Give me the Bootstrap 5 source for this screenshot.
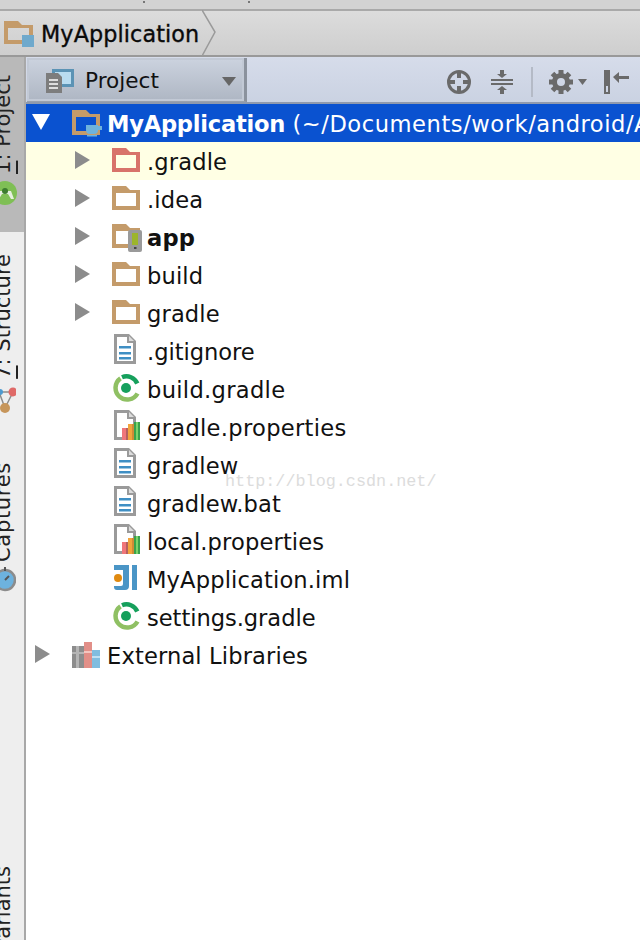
<!DOCTYPE html>
<html lang="en">
<head>
<meta charset="utf-8">
<title>MyApplication</title>
<link href="https://cdn.jsdelivr.net/npm/bootstrap@5.3.0/dist/css/bootstrap.min.css" rel="stylesheet">
<style>
html,body{margin:0;height:940px;overflow:hidden;background:#fff}
body{font-family:"DejaVu Sans","Liberation Sans",sans-serif;color:#111}
.ide-top{height:11px;background:#d3d3d3;border-bottom:2px solid #a9a9a9;gap:103px;padding:1px 0 0 143px}
.ide-dot{width:2px;height:2px;background:#777}
.ide-crumb{height:46px;background:linear-gradient(#dcdcdc,#cecece);border-bottom:2px solid #999}
.ide-crumb-text{font-size:22.3px;color:#0a0a0a;-webkit-text-stroke:.35px #0a0a0a;margin:3px 0 0 5px;letter-spacing:.1px}
.ide-chev{margin-left:3px}
.ide-main{height:883px}
.ide-side{width:26px;flex:none;background:#eeeeee;border-right:2px solid #a8a8a8;overflow:hidden}
.ide-tab-on{height:175px;background:#b9b9b9;padding-top:18px}
.ide-tool{font-size:21px;line-height:24px;writing-mode:vertical-rl;transform:rotate(180deg);white-space:nowrap;margin-left:-9px;width:24px;color:#222}
.ide-tool u{text-underline-offset:2px}
.ide-sicon{display:block;margin-left:-8px}
.ide-droid{margin-top:6px}
.ide-struct{margin-top:22px}
.ide-cap{margin-top:47px;letter-spacing:.7px}
.ide-watch{margin-top:2px}
.ide-var{margin-top:272px}
.ide-bar{height:47px;background:linear-gradient(#d6dcea,#cad2e2);border-bottom:2px solid #8f9aae}
.ide-combo{width:220px;height:44px;margin:1px 0 0 1px;background:linear-gradient(#ccd3df,#aeb6c3);border-right:3px solid #8b929d;border-bottom:1px solid #9aa2ae;box-shadow:inset 0 0 0 2px #c2c9d5;padding-top:4px}
.ide-combo-ic{margin-left:19px}
.ide-combo-text{font-size:21.6px;color:#111;margin-left:11px}
.ide-tools{padding:4px 10px 0 0}
.ide-gap{margin-left:18px}
.ide-sep{width:2px;height:30px;background:#b4bac6;margin:0 15px 0 17px}
.ide-row{height:38px;font-size:22.6px;white-space:nowrap;letter-spacing:.13px}
.ide-row>span,.ide-row>b{margin-top:3px}
.ide-row svg{overflow:visible}
.ide-sel{background:#0a52d0;color:#fff;overflow:hidden;padding-left:6px}
.ide-sel b{letter-spacing:-.25px}
.ide-sel em{font-style:normal;letter-spacing:.55px}
.ide-hint{background:#ffffe4}
.ide-arrow{flex:none;width:18px;margin-right:22px;margin-bottom:2px}
.ide-arrow2{flex:none;width:15px;margin-right:22px;margin-bottom:2px}
.ide-d1{padding-left:49px}
.ide-leaf{padding-left:86px}
.ide-ext{padding-left:9px}
.ide-ic{flex:none;width:28px;height:30px;margin-right:7px;margin-bottom:4px}
.ide-wide{letter-spacing:.3px}
.ide-narrow{letter-spacing:-.05px}
.ide-mark{position:absolute;left:225px;top:469px;font-family:"Liberation Mono",monospace;font-size:16.8px;color:#dcdcdc;pointer-events:none}
</style>
</head>
<body class="position-relative">
<svg width="0" height="0" class="position-absolute">
<defs>
<symbol id="folder" viewBox="0 0 28 30"><path fill-rule="evenodd" d="M0 4h14l4 4h10v20H0zM4 11v13h20V11z"/></symbol>
<symbol id="doc" viewBox="0 0 28 30"><path fill="#9a9a9a" d="M2 0h15l7 7v23H2z"/><path fill="#fff" d="M5 3h10v6h6v18H5z"/><path fill="#dcdcdc" d="M17 2l5 5h-5z"/><path fill="#3f8fc4" d="M7 12h12v2.500H7zM7 18h12v2.500H7zM7 23h12v2.500H7z"/></symbol>
<symbol id="props" viewBox="0 0 28 30"><path fill="#9a9a9a" d="M2 0h15l7 7v23H2z"/><path fill="#fff" d="M5 3h10v6h6v18H5z"/><path fill="#dcdcdc" d="M17 2l5 5h-5z"/><path fill="#f0767a" d="M10 18h6v12h-6z"/><path fill="#b5615f" d="M14 18h2v12h-2z"/><path fill="#f2a43c" d="M16 14h6v16h-6z"/><path fill="#d08a36" d="M20 14h2v16h-2z"/><path fill="#7cd36a" d="M22 12h6v18h-6z"/><path fill="#3aa24c" d="M22 12h2v18h-2zM26 12h2v18h-2z"/></symbol>
<symbol id="gradle" viewBox="0 0 28 30"><g transform="translate(0 1.500)"><g fill="none" stroke-width="4.500"><path stroke="#8fc063" d="M8.500 4.800A11.700 11.700 0 1 0 25.500 20"/><path stroke="#16a05c" d="M10 3.800A11.700 11.700 0 0 1 25.300 10"/></g><circle cx="14" cy="14.500" r="5" fill="#16a05c"/></g></symbol>
</defs>
</svg>

<div class="ide-top d-flex align-items-start"><span class="ide-dot"></span><span class="ide-dot"></span></div>
<div class="ide-crumb d-flex align-items-center position-relative">
  <svg class="ms-1" width="32" height="28" viewBox="0 0 32 28"><path fill="#c49b6a" fill-rule="evenodd" d="M0 2h14l4 4h11v19H0zM4 9v12h21V9z"/><path fill="#6fa9cc" d="M18 16h12v12H18z"/></svg>
  <span class="ide-crumb-text">MyApplication</span>
  <svg class="ide-chev" width="16" height="46" viewBox="0 0 16 46"><path fill="none" stroke="#9a9a9a" stroke-width="1.500" d="M0 0l13 22L0 46"/></svg>
</div>
<div class="ide-main d-flex">
  <div class="ide-side">
    <div class="ide-tab-on">
      <div class="ide-tool"><u>1</u>: Project</div>
      <svg class="ide-sicon ide-droid" width="30" height="30" viewBox="0 0 30 30"><circle cx="13" cy="13" r="12" fill="#7fbf55"/><path fill="#e6efe0" d="M7 11h12l3 8h-3l-3-5h-6l-3 5H4z"/><circle cx="13" cy="11" r="3" fill="#3d7c2f"/></svg>
    </div>
    <div class="ide-tool ide-struct"><u>7</u>: Structure</div>
    <svg class="ide-sicon" width="24" height="36" viewBox="0 0 24 36"><path fill="none" stroke="#8c8c8c" stroke-width="1.500" d="M7 13h14L13 29zM7 13l6 16"/><circle cx="21" cy="13" r="4.500" fill="#df6a68"/><circle cx="13" cy="29" r="5" fill="#c6955a"/><circle cx="8" cy="13" r="3" fill="#4d9ad0"/></svg>
    <div class="ide-tool ide-cap">Captures</div>
    <svg class="ide-sicon ide-watch" width="24" height="30" viewBox="0 0 24 30"><circle cx="13" cy="16" r="10" fill="#6db2de" stroke="#8c8c8c" stroke-width="2.500"/><path stroke="#555" stroke-width="2" d="M13 16l4-4M13 3v4"/></svg>
    <div class="ide-tool ide-var">Build Variants</div>
  </div>
  <div class="flex-grow-1 position-relative overflow-hidden">
    <div class="ide-bar d-flex align-items-center">
      <div class="ide-combo d-flex align-items-center">
        <svg class="ide-combo-ic" width="28" height="26" viewBox="0 0 28 26"><path fill="#5b93b5" d="M6 0h22v18H6z"/><path fill="#b9dcf0" d="M9 3h16v12H9z"/><path fill="#7d7d7d" d="M0 4h12l4 4v16H0z"/><path fill="#ddd" d="M3 10h9v2H3zM3 14h9v2H3zM3 18h9v2H3z"/></svg>
        <span class="ide-combo-text">Project</span>
        <svg class="ms-auto me-2" width="14" height="9" viewBox="0 0 14 9"><path fill="#666" d="M0 0h14L7 9z"/></svg>
      </div>
      <div class="ide-tools ms-auto d-flex align-items-center">
        <svg width="26" height="26" viewBox="0 0 26 26"><circle cx="13" cy="13" r="10.500" fill="none" stroke="#6a6a6a" stroke-width="3"/><path stroke="#6a6a6a" stroke-width="4" d="M13 2v7M13 17v7M2 13h7M17 13h7"/></svg>
        <svg class="ide-gap" width="24" height="24" viewBox="0 0 24 24"><path stroke="#6a6a6a" stroke-width="2" d="M1 10h22M1 14h22"/><path fill="#6a6a6a" d="M10 0h4v4h3l-5 4-5-4h3zM10 24h4v-4h3l-5-4-5 4h3z"/></svg>
        <div class="ide-sep"></div>
        <svg width="26" height="26" viewBox="0 0 26 26"><circle cx="13" cy="13" r="6.500" fill="none" stroke="#6a6a6a" stroke-width="5"/><path stroke="#6a6a6a" stroke-width="5" d="M13 1v5M13 20v5M1 13h5M20 13h5M4.500 4.500l3.500 3.500M18 18l3.500 3.500M4.500 21.500L8 18M18 8l3.500-3.500"/></svg>
        <svg class="ms-1 me-3" width="10" height="6" viewBox="0 0 10 6"><path fill="#6a6a6a" d="M0 0h9L4.500 6z"/></svg>
        <svg width="26" height="24" viewBox="0 0 26 24"><path fill="#6a6a6a" fill-rule="evenodd" d="M0 0h6v24H0zM2 16v6h2v-6z"/><path fill="#6a6a6a" d="M9 7l6-5v4h10v3H15v4z"/></svg>
      </div>
    </div>

    <div class="ide-row ide-sel d-flex align-items-center">
      <svg class="ide-arrow" height="18" viewBox="0 0 18 18"><path fill="#fff" d="M0 1h18L9 17z"/></svg>
      <svg class="ide-ic" viewBox="0 0 28 30"><path fill="#c49b6a" fill-rule="evenodd" d="M0 4h14l4 4h10v21H0zM4 11v14h20V11z"/><path fill="#6fb3dc" d="M14 19h12v5q0 4-4 4h-4q-4 0-4-4zM26 20h4v4h-4zM15 29h10v1.500H15z"/></svg>
      <span><b>MyApplication</b> <em>(~/Documents/work/android/AndroidStudioProjects/MyApplication)</em></span>
    </div>
    <div class="ide-row ide-hint d-flex align-items-center ide-d1"><svg class="ide-arrow2" height="18" viewBox="0 0 15 18"><path fill="#8c8c8c" d="M0 0l15 9-15 9z"/></svg><svg class="ide-ic" fill="#d8736a"><use href="#folder"/></svg><span>.gradle</span></div>
    <div class="ide-row d-flex align-items-center ide-d1"><svg class="ide-arrow2" height="18" viewBox="0 0 15 18"><path fill="#8c8c8c" d="M0 0l15 9-15 9z"/></svg><svg class="ide-ic" fill="#c49b6a"><use href="#folder"/></svg><span>.idea</span></div>
    <div class="ide-row d-flex align-items-center ide-d1"><svg class="ide-arrow2" height="18" viewBox="0 0 15 18"><path fill="#8c8c8c" d="M0 0l15 9-15 9z"/></svg><svg class="ide-ic" viewBox="0 0 28 30"><use href="#folder" fill="#c49b6a"/><path fill="#9a9a9a" d="M18 10h10q2 0 2 2v18q0 2-2 2H18q-2 0-2-2V12q0-2 2-2z"/><path fill="#9cb52c" d="M20 13h6v12h-6z"/><path fill="#444" d="M22 27h2.500v2H22z"/></svg><b>app</b></div>
    <div class="ide-row d-flex align-items-center ide-d1"><svg class="ide-arrow2" height="18" viewBox="0 0 15 18"><path fill="#8c8c8c" d="M0 0l15 9-15 9z"/></svg><svg class="ide-ic" fill="#c49b6a"><use href="#folder"/></svg><span>build</span></div>
    <div class="ide-row d-flex align-items-center ide-d1"><svg class="ide-arrow2" height="18" viewBox="0 0 15 18"><path fill="#8c8c8c" d="M0 0l15 9-15 9z"/></svg><svg class="ide-ic" fill="#c49b6a"><use href="#folder"/></svg><span>gradle</span></div>
    <div class="ide-row d-flex align-items-center ide-leaf"><svg class="ide-ic"><use href="#doc"/></svg><span class="ide-narrow">.gitignore</span></div>
    <div class="ide-row d-flex align-items-center ide-leaf"><svg class="ide-ic"><use href="#gradle"/></svg><span class="ide-wide">build.gradle</span></div>
    <div class="ide-row d-flex align-items-center ide-leaf"><svg class="ide-ic"><use href="#props"/></svg><span class="ide-wide">gradle.properties</span></div>
    <div class="ide-row d-flex align-items-center ide-leaf"><svg class="ide-ic"><use href="#doc"/></svg><span>gradlew</span></div>
    <div class="ide-row d-flex align-items-center ide-leaf"><svg class="ide-ic"><use href="#doc"/></svg><span>gradlew.bat</span></div>
    <div class="ide-row d-flex align-items-center ide-leaf"><svg class="ide-ic"><use href="#props"/></svg><span>local.properties</span></div>
    <div class="ide-row d-flex align-items-center ide-leaf"><svg class="ide-ic" viewBox="0 0 28 30"><path fill="#4a95c6" d="M2 3h15v21q0 4-4 4H5q-3 0-3-3v-1h7q2 0 2-2V8H2zM20 3h5v25h-5z"/><circle cx="6" cy="16" r="4" fill="#e08a10"/></svg><span>MyApplication.iml</span></div>
    <div class="ide-row d-flex align-items-center ide-leaf"><svg class="ide-ic"><use href="#gradle"/></svg><span class="ide-narrow">settings.gradle</span></div>
    <div class="ide-row d-flex align-items-center ide-ext"><svg class="ide-arrow2" height="18" viewBox="0 0 15 18"><path fill="#8c8c8c" d="M0 0l15 9-15 9z"/></svg><svg class="ide-ic" viewBox="0 0 28 30"><path fill="#8d8d8d" d="M0 8h12v22H0z"/><path fill="#b5b5b5" d="M4 8h3v22H4zM0 14h12v2H0z"/><path fill="#e28f88" d="M12 4h8v26h-8z"/><path fill="#f4c6c0" d="M12 13h8v2h-8z"/><path fill="#80bddf" d="M20 12h8v18h-8z"/><path fill="#bfe0f2" d="M20 18h8v2h-8z"/></svg><span>External Libraries</span></div>
  </div>
</div>
<div class="ide-mark">http://blog.csdn.net/</div>
</body>
</html>
